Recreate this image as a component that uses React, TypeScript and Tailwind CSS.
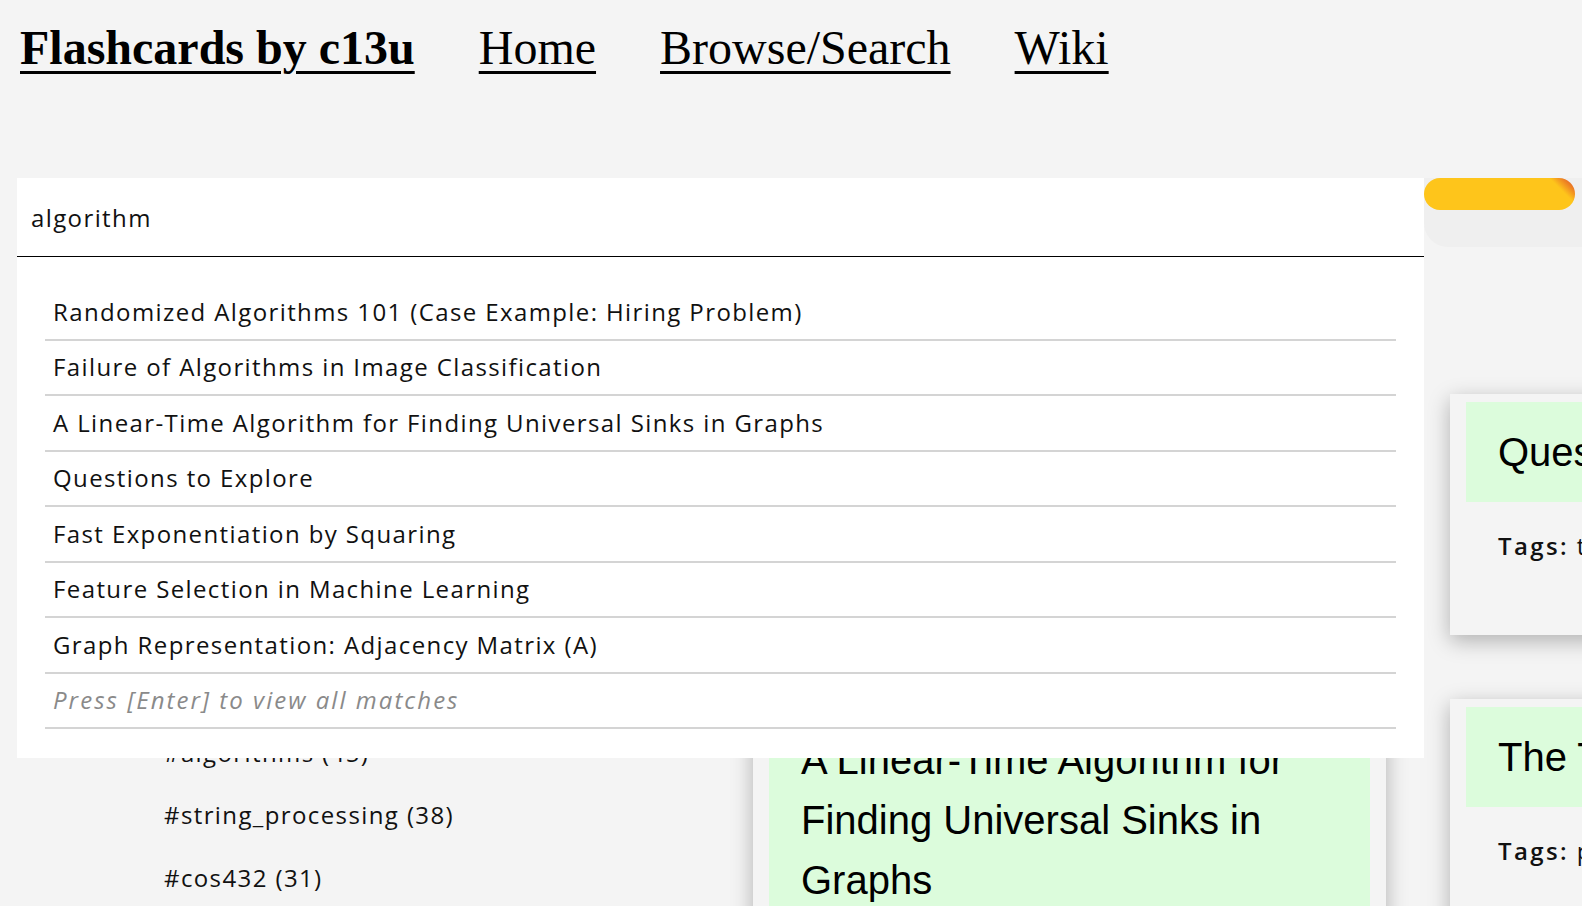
import { useState } from 'react';

const results = [
  'Randomized Algorithms 101 (Case Example: Hiring Problem)',
  'Failure of Algorithms in Image Classification',
  'A Linear-Time Algorithm for Finding Universal Sinks in Graphs',
  'Questions to Explore',
  'Fast Exponentiation by Squaring',
  'Feature Selection in Machine Learning',
  'Graph Representation: Adjacency Matrix (A)',
];

const tags = [
  '#cos226 (112)',
  '#computer_science (98)',
  '#machine_learning (77)',
  '#cos340 (60)',
  '#probability (52)',
  '#algorithms (45)',
  '#string_processing (38)',
  '#cos432 (31)',
];

type Card = { title: string; tags: string; h?: string };

const middleCol: Card[] = [
  { title: 'Randomized Algorithms 101', tags: 'algorithms, probability', h: 'h-[244px]' },
  { title: 'A Linear-Time Algorithm for Finding Universal Sinks in Graphs', tags: 'algorithms, graphs, cos226' },
];

const rightCol: Card[] = [
  { title: 'Questions to Explore', tags: 'to_explore, meta', h: 'h-[241px]' },
  { title: 'The Two Envelopes Paradox', tags: 'probability, puzzles' },
];

function FlashCard({ card }: { card: Card }) {
  return (
    <div className={`bg-[#f4f4f4] shadow-[0_6px_20px_rgba(0,0,0,0.28)] px-4 pt-2 pb-[72px] ${card.h ?? ''}`}>
      <div className="bg-[#dcfcdc] px-8 py-5">
        <h2 className="font-['Liberation_Sans',Arial,sans-serif] text-[40px] leading-[60px] text-black">
          {card.title}
        </h2>
      </div>
      <p className="mt-7 px-8 text-[24px] leading-8 tracking-[0.058em] text-[#111] whitespace-nowrap">
        <span className="font-semibold tracking-[0.1em]">Tags:</span> {card.tags}
      </p>
    </div>
  );
}

export default function App() {
  const [query, setQuery] = useState('algorithm');

  return (
    <div className="min-h-screen h-[906px] overflow-hidden bg-[#f4f4f4] font-['Open_Sans',sans-serif] text-[#111]">
      {/* header */}
      <header className="flex items-baseline pl-5 pt-[20px] font-['Liberation_Serif','Times_New_Roman',serif] text-[48px] leading-[55px] text-black">
        <a href="#" className="font-bold underline decoration-[3px] underline-offset-[7px]">Flashcards by c13u</a>
        <a href="#" className="ml-16 underline decoration-[3px] underline-offset-[7px]">Home</a>
        <a href="#" className="ml-16 underline decoration-[3px] underline-offset-[7px]">Browse/Search</a>
        <a href="#" className="ml-16 underline decoration-[3px] underline-offset-[7px]">Wiki</a>
      </header>

      {/* search row */}
      <div className="mt-[103px] flex items-start pl-[17px]">
        <div className="relative z-10 w-[1407px] shrink-0">
          <input
            value={query}
            onChange={(e) => setQuery(e.target.value)}
            className="block h-[79px] w-full border-b border-black bg-white pl-[14px] text-[24px] tracking-[0.058em] text-[#111] outline-none"
          />
          <div className="absolute left-0 right-0 top-full bg-white pt-[28px] pb-[29px]">
            <ul className="mx-7">
              {results.map((r) => (
                <li key={r} className="flex h-[55.5px] items-center border-b-2 border-[#d4d4d4] pl-2 text-[24px] tracking-[0.058em] whitespace-nowrap">
                  {r}
                </li>
              ))}
              <li className="flex h-[55.5px] items-center border-b-2 border-[#d4d4d4] pl-2 text-[24px] italic tracking-[0.085em] text-[#8a8a8a]">
                Press [Enter] to view all matches
              </li>
            </ul>
          </div>
        </div>
        <div className="h-[69px] flex-1 rounded-bl-[24px] bg-[#efefef]">
          <div className="h-8 w-[151px] rounded-full bg-[linear-gradient(225deg,#d9452b_0%,#f08a22_8%,#fec51b_14%,#fec51b_100%)]" />
        </div>
      </div>

      {/* content */}
      <div className="mt-[137px] flex">
        <aside className="w-[753px] shrink-0 pl-[164px] pt-[15px]">
          <ul>
            {tags.map((t) => (
              <li key={t} className="flex h-[62.5px] items-center text-[24px] tracking-[0.058em] whitespace-nowrap">
                {t}
              </li>
            ))}
          </ul>
        </aside>
        <div className="flex gap-16">
          <div className="flex w-[633px] shrink-0 flex-col gap-16">
            {middleCol.map((c) => (
              <FlashCard key={c.title} card={c} />
            ))}
          </div>
          <div className="flex w-[633px] shrink-0 flex-col gap-16">
            {rightCol.map((c) => (
              <FlashCard key={c.title} card={c} />
            ))}
          </div>
        </div>
      </div>
    </div>
  );
}
